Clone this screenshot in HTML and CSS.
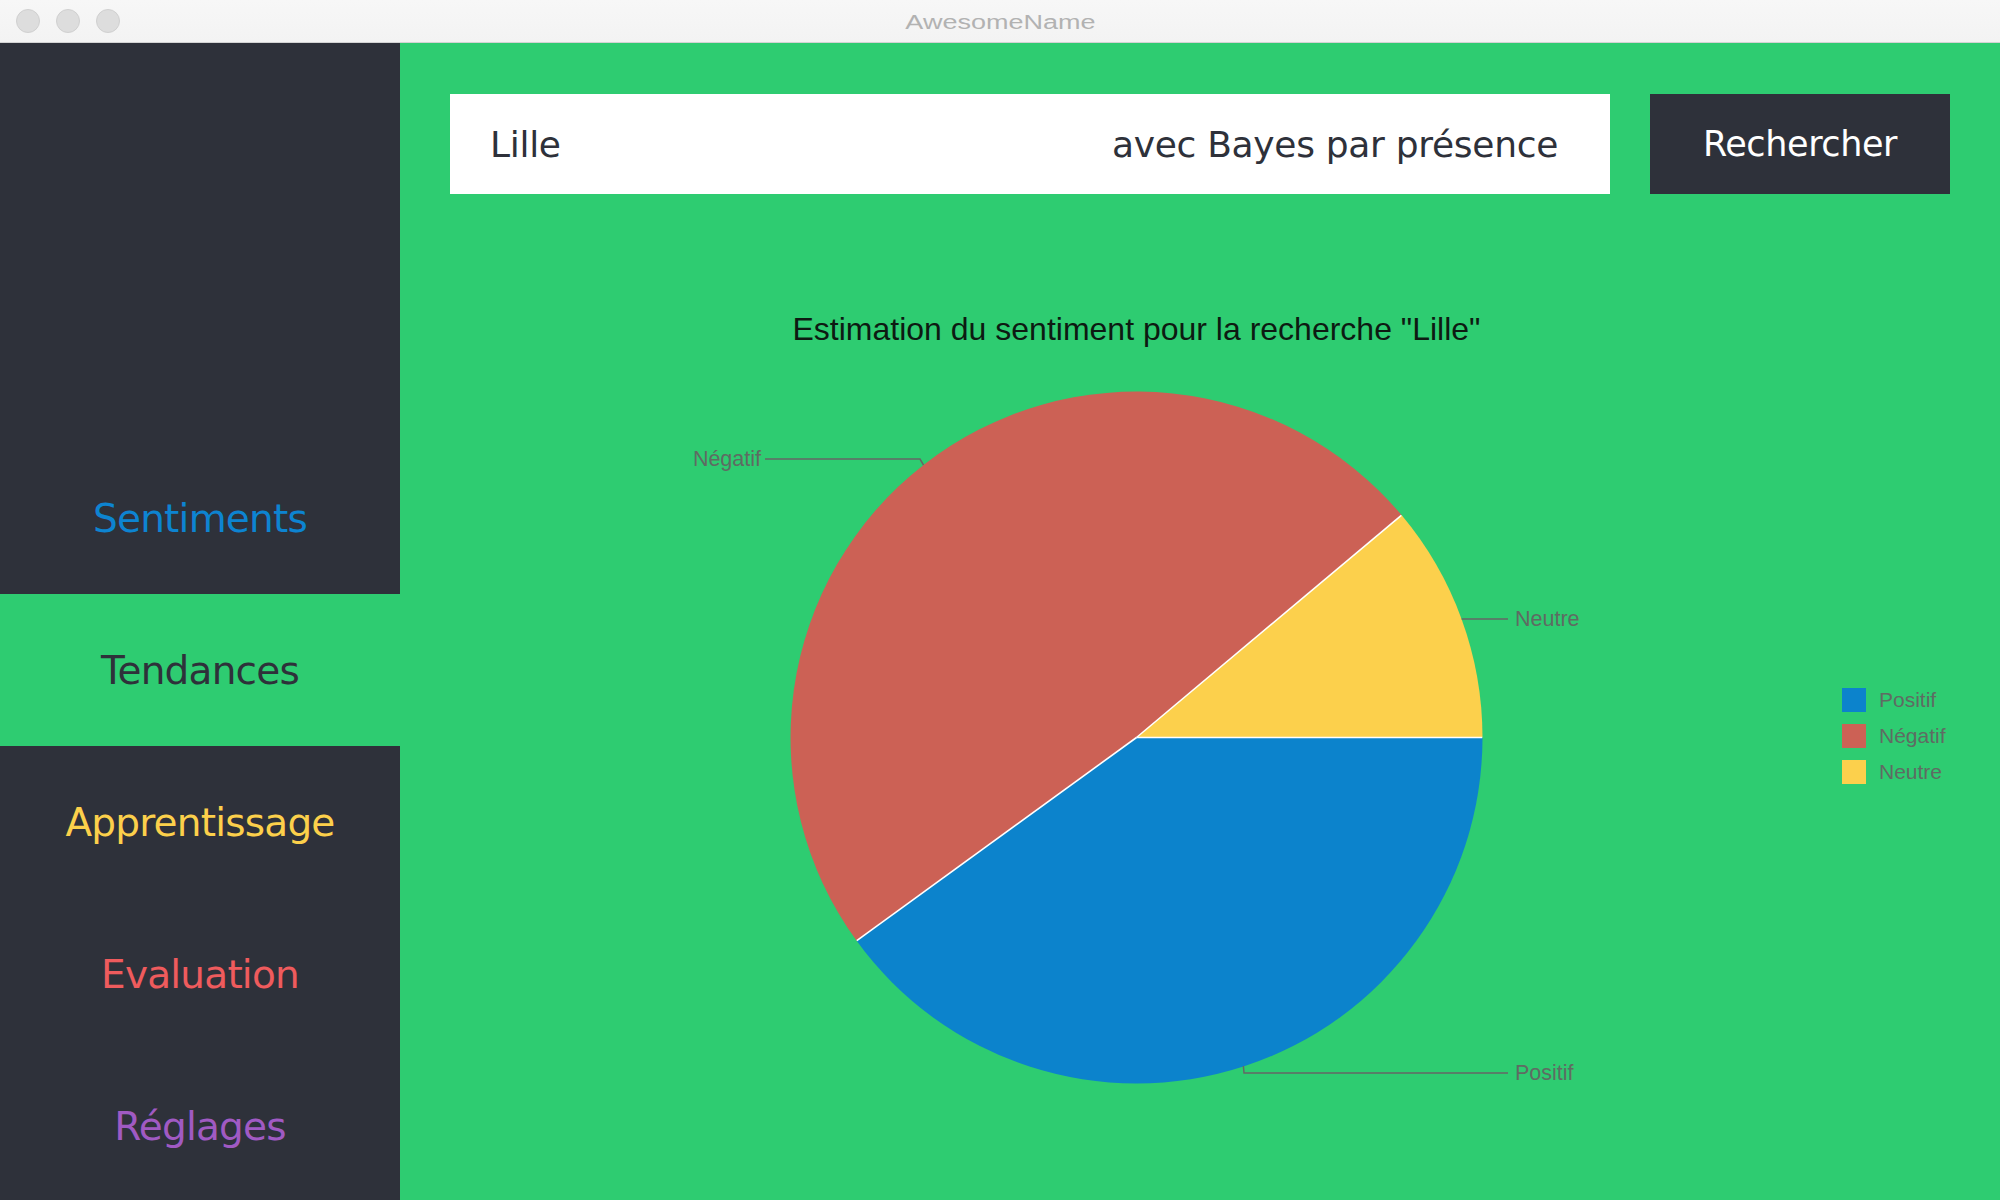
FILE: index.html
```html
<!DOCTYPE html>
<html lang="fr">
<head>
<meta charset="utf-8">
<title>AwesomeName</title>
<link rel="stylesheet" href="styles.css">
</head>
<body>
<div class="window">
  <header class="titlebar">
    <div class="lights">
      <span class="light"></span>
      <span class="light"></span>
      <span class="light"></span>
    </div>
    <div class="title"><span class="title-text">AwesomeName</span></div>
    <div class="spacer"></div>
  </header>
  <div class="app">
    <nav class="sidebar">
      <a class="nav-item nav-sentiments">Sentiments</a>
      <a class="nav-item nav-tendances active">Tendances</a>
      <a class="nav-item nav-apprentissage">Apprentissage</a>
      <a class="nav-item nav-evaluation">Evaluation</a>
      <a class="nav-item nav-reglages">Réglages</a>
    </nav>
    <main class="main">
      <div class="search-row">
        <div class="search-field">
          <span class="query">Lille</span>
          <span class="method">avec Bayes par présence</span>
        </div>
        <button class="search-btn">Rechercher</button>
      </div>
      <section class="chart">
        <div class="plot">
          <h2 class="chart-title">Estimation du sentiment pour la recherche "Lille"</h2>
          <svg class="pie" width="1373" height="760" viewBox="0 0 1373 760">
            <path class="slice slice-pos" d="M686.5 389.5 L1032.5 389.5 A346 346 0 0 1 406.58 592.87 Z"/>
            <path class="slice slice-neg" d="M686.5 389.5 L406.58 592.87 A346 346 0 0 1 951.55 167.10 Z"/>
            <path class="slice slice-neu" d="M686.5 389.5 L951.55 167.10 A346 346 0 0 1 1032.5 389.5 Z"/>
            <line class="divider" x1="686.5" y1="389.5" x2="1032.2" y2="389.5"/>
            <line class="divider" x1="686.5" y1="389.5" x2="406.8" y2="592.7"/>
            <line class="divider" x1="686.5" y1="389.5" x2="951.3" y2="167.3"/>
            <polyline class="label-line" points="473.5,117 470,111 315,111"/>
            <text class="pie-label" x="311" y="118" text-anchor="end">Négatif</text>
            <polyline class="label-line" points="1011.6,271 1058,271"/>
            <text class="pie-label" x="1065" y="278">Neutre</text>
            <polyline class="label-line" points="793.4,718 794,725 1058,725"/>
            <text class="pie-label" x="1065" y="732">Positif</text>
          </svg>
        </div>
        <ul class="legend">
          <li class="legend-item"><span class="swatch swatch-pos"></span>Positif</li>
          <li class="legend-item"><span class="swatch swatch-neg"></span>Négatif</li>
          <li class="legend-item"><span class="swatch swatch-neu"></span>Neutre</li>
        </ul>
      </section>
    </main>
  </div>
</div>
</body>
</html>
```

FILE: styles.css
```css
* {
  box-sizing: border-box;
}

html, body {
  margin: 0;
  padding: 0;
  width: 2000px;
  height: 1200px;
  overflow: hidden;
  background: #2ecc71;
}

.window {
  width: 2000px;
  height: 1200px;
  display: flex;
  flex-direction: column;
  overflow: hidden;
}

/* Title bar */
.titlebar {
  height: 43px;
  flex: none;
  display: grid;
  grid-template-columns: 1fr auto 1fr;
  align-items: center;
  background: linear-gradient(#f7f7f7, #f3f3f3);
  border-bottom: 1px solid #d3d3d3;
}

.lights {
  display: flex;
  gap: 16px;
  padding-left: 16px;
}

.light {
  width: 24px;
  height: 24px;
  border-radius: 50%;
  background: #dddddd;
  border: 1px solid #d0d0d0;
}

.title {
  font-family: "Liberation Sans", Arial, sans-serif;
  font-size: 20px;
  color: #b2b2b2;
  text-align: center;
  padding-top: 2px;
}

.title-text {
  display: inline-block;
  transform: scaleX(1.35);
}

/* App body */
.app {
  flex: 1;
  display: flex;
  min-height: 0;
  overflow: hidden;
}

.sidebar {
  width: 400px;
  flex: none;
  background: #2e313a;
  padding-top: 399px;
  display: flex;
  flex-direction: column;
}

.nav-item {
  height: 152px;
  flex: none;
  display: flex;
  align-items: center;
  justify-content: center;
  font-family: "DejaVu Sans", sans-serif;
  font-size: 39px;
  letter-spacing: -0.8px;
  text-decoration: none;
}

.nav-sentiments { color: #0d84d1; }
.nav-tendances { color: #2e313a; }
.nav-tendances.active { background: #2ecc71; }
.nav-apprentissage { color: #fcd04b; }
.nav-evaluation { color: #ef5b5d; }
.nav-reglages { color: #a05ac3; }

/* Main */
.main {
  flex: 1;
  background: #2ecc71;
  padding: 51px 50px 0 50px;
  display: flex;
  flex-direction: column;
}

.search-row {
  display: flex;
  gap: 40px;
  height: 100px;
  flex: none;
}

.search-field {
  flex: 1;
  background: #ffffff;
  display: flex;
  align-items: center;
  justify-content: space-between;
  padding: 0 52px 0 40px;
  font-family: "DejaVu Sans", sans-serif;
  font-size: 36px;
  letter-spacing: -0.3px;
  color: #2e313a;
}

.search-btn {
  width: 300px;
  flex: none;
  border: none;
  margin: 0;
  background: #2e313a;
  color: #ffffff;
  font-family: "DejaVu Sans", sans-serif;
  font-size: 35px;
  letter-spacing: -0.4px;
  padding: 0;
}

/* Chart */
.chart {
  display: flex;
  flex: 1;
  min-height: 0;
}

.plot {
  width: 1373px;
  flex: none;
  display: flex;
  flex-direction: column;
}

.chart-title {
  margin: 117px 0 0 0;
  font-family: "Liberation Sans", Arial, sans-serif;
  font-weight: normal;
  font-size: 32px;
  line-height: 37px;
  color: #0d1a12;
  text-align: center;
}

.pie {
  display: block;
  flex: none;
}

.slice-pos { fill: #0c83cc; }
.slice-neg { fill: #cc6155; }
.slice-neu { fill: #fcd04c; }

.divider {
  stroke: #ffffff;
  stroke-width: 1.6;
}

.label-line {
  fill: none;
  stroke: #666666;
  stroke-width: 1.5;
}

.pie-label {
  font-family: "Liberation Sans", Arial, sans-serif;
  font-size: 21.5px;
  fill: #5f6b63;
}

.legend {
  list-style: none;
  margin: 494px 0 0 0;
  padding: 0 0 0 19px;
  display: flex;
  flex-direction: column;
  gap: 12px;
  flex: 1;
}

.legend-item {
  display: flex;
  align-items: center;
  gap: 13px;
  height: 24px;
  font-family: "Liberation Sans", Arial, sans-serif;
  font-size: 21px;
  color: #5f6b63;
}

.swatch {
  width: 24px;
  height: 24px;
  flex: none;
}

.swatch-pos { background: #0c83cc; }
.swatch-neg { background: #cc6155; }
.swatch-neu { background: #fcd04c; }
```
